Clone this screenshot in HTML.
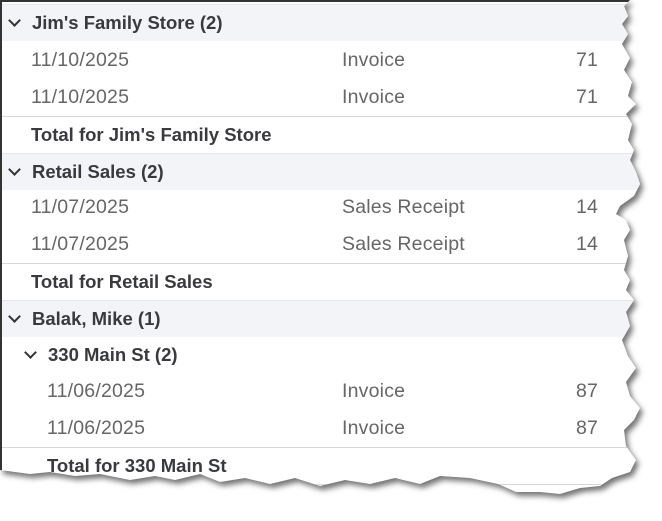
<!DOCTYPE html>
<html><head><style>
html,body{margin:0;padding:0;background:#fff;width:662px;height:518px;overflow:hidden}
.wrap{position:absolute;left:0;top:0;width:662px;height:518px;filter:drop-shadow(3px 4px 3px rgba(0,0,0,.55))}
.paper{position:absolute;left:0;top:0;width:650px;height:505px;background:#fff;border-top:2px solid #333;border-left:2px solid #333;box-sizing:border-box;
clip-path:polygon(0 0,630px 0,624px 6px,628px 16px,622px 24px,628px 34px,622px 44px,630px 58px,624px 70px,632px 82px,628px 96px,636px 104px,626px 114px,632px 124px,628px 140px,634px 150px,630px 160px,636px 172px,640px 184px,634px 196px,620px 206px,616px 214px,626px 220px,630px 230px,624px 240px,628px 256px,624px 270px,630px 280px,626px 290px,634px 300px,626px 312px,630px 326px,622px 340px,628px 356px,636px 368px,626px 382px,630px 396px,640px 408px,634px 420px,624px 430px,626px 446px,636px 460px,630px 472px,612px 478px,600px 486px,580px 488px,560px 494px,540px 492px,516px 492px,498px 484px,470px 478px,440px 476px,420px 484px,395px 478px,370px 484px,345px 480px,320px 486px,295px 478px,270px 484px,245px 478px,220px 482px,200px 474px,175px 480px,155px 476px,130px 480px,100px 474px,75px 476px,50px 472px,30px 474px,0 470px);
font-family:"Liberation Sans",sans-serif}
.row{position:absolute;left:0;width:650px;height:37px;line-height:35px;font-size:18.5px}
.g{background:#f3f4f7;border-top:1px solid #e6e7ea;box-sizing:border-box}
.b{font-weight:bold;color:#393a3d}
.d{color:#666;font-size:19.5px;letter-spacing:0.2px}
.t{border-top:1px solid #d8d8d8;box-sizing:border-box}
.row span{position:absolute}
.chev{position:absolute;top:11px;width:7px;height:7px;border-right:2px solid #333;border-bottom:2px solid #333;transform:rotate(45deg)}
</style></head><body>
<div class="wrap"><div class="paper">
<div class="row g b" style="top:2px"><i class="chev" style="left:8px"></i><span style="left:30px">Jim's Family Store (2)</span></div>
<div class="row d" style="top:41px"><span style="left:29px">11/10/2025</span><span style="left:340px">Invoice</span><span style="left:574px">71</span></div>
<div class="row d" style="top:78px"><span style="left:29px">11/10/2025</span><span style="left:340px">Invoice</span><span style="left:574px">71</span></div>
<div class="row t b" style="top:114px"><span style="left:29px">Total for Jim's Family Store</span></div>
<div class="row g b" style="top:151px"><i class="chev" style="left:8px"></i><span style="left:30px">Retail Sales (2)</span></div>
<div class="row d" style="top:188px"><span style="left:29px">11/07/2025</span><span style="left:340px">Sales Receipt</span><span style="left:574px">14</span></div>
<div class="row d" style="top:225px"><span style="left:29px">11/07/2025</span><span style="left:340px">Sales Receipt</span><span style="left:574px">14</span></div>
<div class="row t b" style="top:261px"><span style="left:29px">Total for Retail Sales</span></div>
<div class="row g b" style="top:298px"><i class="chev" style="left:8px"></i><span style="left:30px">Balak, Mike (1)</span></div>
<div class="row b" style="top:335px"><i class="chev" style="left:24px"></i><span style="left:46px">330 Main St (2)</span></div>
<div class="row d" style="top:372px"><span style="left:45px">11/06/2025</span><span style="left:340px">Invoice</span><span style="left:574px">87</span></div>
<div class="row d" style="top:409px"><span style="left:45px">11/06/2025</span><span style="left:340px">Invoice</span><span style="left:574px">87</span></div>
<div class="row t b" style="top:445px"><span style="left:45px">Total for 330 Main St</span></div>
<div class="row t" style="top:482px"></div>
</div></div>
</body></html>
